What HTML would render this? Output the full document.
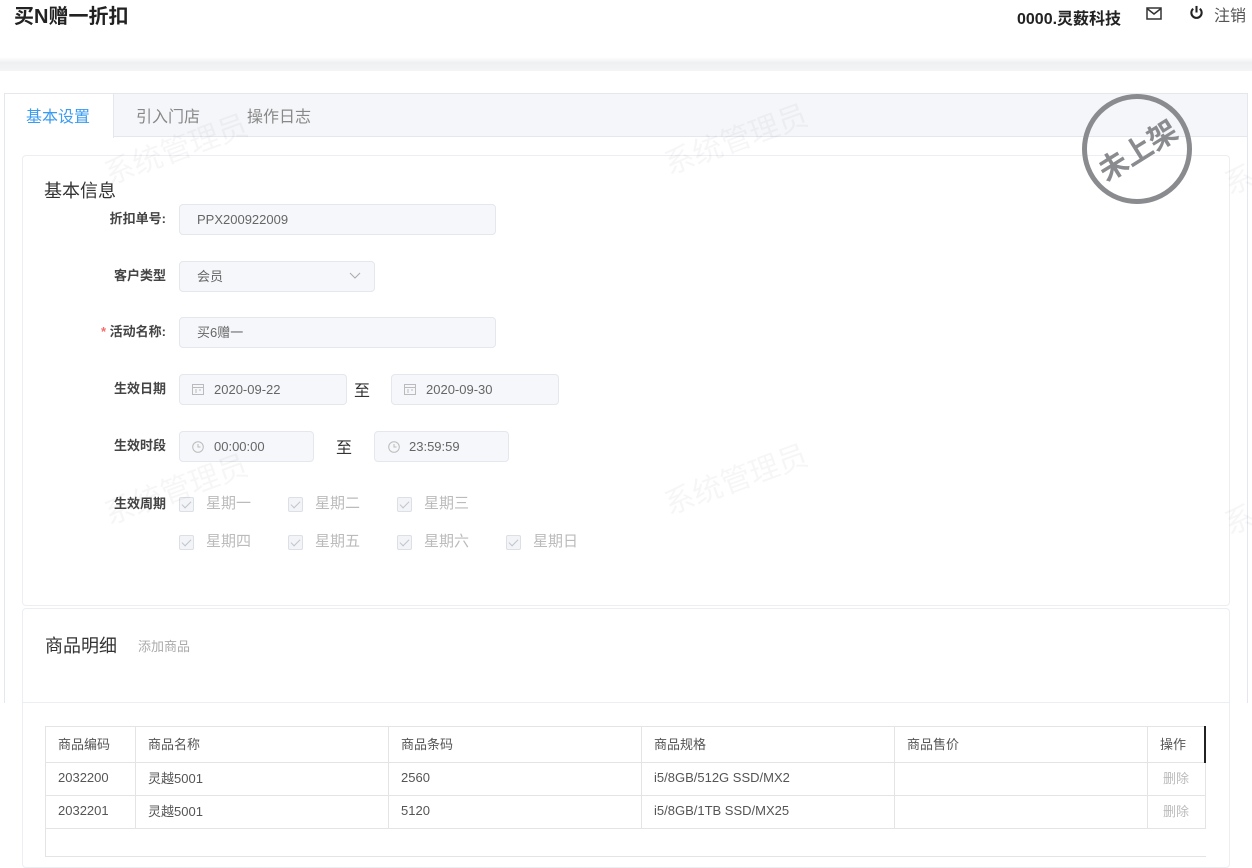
<!DOCTYPE html>
<html><head><meta charset="utf-8"><style>
*{margin:0;padding:0;box-sizing:border-box}
body{width:1252px;height:857px;overflow:hidden;background:#fff;font-family:"Liberation Sans","Noto Sans CJK SC",sans-serif;color:#333;position:relative}
.a{position:absolute}
.title{left:14px;top:0px;font-size:20px;font-weight:bold;color:#222}
.band{left:0;top:57px;width:1252px;height:14px;background:linear-gradient(#fff,#eef0f2 40%,#f3f4f6)}
.outer{left:4px;top:93px;width:1244px;height:610px;border:1px solid #e4e7ed;border-bottom:none}
.tabbar{left:5px;top:94px;width:1242px;height:43px;background:#f5f6f9;border-bottom:1px solid #e4e7ed}
.tab{top:96px;height:44px;line-height:44px;font-size:16px;color:#888}
.card{border:1px solid #ebeef2;border-radius:4px;background:#fff}
.lbl{width:120px;text-align:right;font-size:13px;font-weight:bold;color:#444;left:46px}
.inp{left:179px;height:31px;background:#f5f7fa;border:1px solid #e4e7ed;border-radius:4px;font-size:13px;color:#666;line-height:29px;padding-left:17px}
.cb{width:15px;height:15px;border:1px solid #dcdfe6;background:#f2f4f7;border-radius:2px}
.cb:after{content:"";position:absolute;left:4px;top:1px;width:4px;height:8px;border:solid #c0c4cc;border-width:0 1px 1px 0;transform:rotate(45deg)}
.cbl{font-size:15px;color:#bbb}
.wm{font-size:30px;color:rgba(0,0,0,0.035);transform:rotate(-20deg);white-space:nowrap}
table{border-collapse:collapse;font-size:13px;color:#555}
td{border:1px solid #e4e4e4;padding-left:12px;height:33px;padding-bottom:3px}
th{border:1px solid #e4e4e4;padding-left:12px;height:36px;text-align:left;font-weight:normal;color:#555;padding-bottom:2px}
</style></head><body>
<div class="a title">买N赠一折扣</div>
<div class="a" style="left:1017px;top:5px;font-size:16px;font-weight:bold;color:#222">0000.灵薮科技</div>
<svg class="a" style="left:1146px;top:7px" width="16" height="13" viewBox="0 0 16 13"><rect x="1" y="1" width="14" height="11" fill="none" stroke="#333" stroke-width="1.5"/><path d="M1 1.5L8 7L15 1.5" fill="none" stroke="#333" stroke-width="1.5"/></svg>
<svg class="a" style="left:1189px;top:5px" width="15" height="15" viewBox="0 0 16 16"><path d="M4.5 4A5.5 5.5 0 1 0 11.5 4" fill="none" stroke="#222" stroke-width="2.2"/><path d="M8 1V8" stroke="#222" stroke-width="2.2"/></svg>
<div class="a" style="left:1214px;top:2px;font-size:16px;color:#555">注销</div>
<div class="a band"></div>
<div class="a outer"></div>
<div class="a tabbar"></div>
<div class="a" style="left:5px;top:94px;width:109px;height:44px;background:#fff;border-right:1px solid #e4e7ed"></div>
<div class="a tab" style="left:26px;color:#3a9cf0">基本设置</div>
<div class="a tab" style="left:136px">引入门店</div>
<div class="a tab" style="left:247px">操作日志</div>
<div class="a card" style="left:22px;top:155px;width:1208px;height:451px"></div>
<div class="a" style="left:44px;top:177px;font-size:18px;color:#333">基本信息</div>
<div class="a lbl" style="top:208px">折扣单号:</div>
<div class="a inp" style="top:204px;width:317px">PPX200922009</div>
<div class="a lbl" style="top:265px">客户类型</div>
<div class="a inp" style="top:261px;width:196px">会员</div>
<svg class="a" style="left:349px;top:272px" width="12" height="8"><path d="M1 1L6 6L11 1" fill="none" stroke="#aaa"/></svg>
<div class="a lbl" style="top:321px"><span style="color:#f56c6c">* </span>活动名称:</div>
<div class="a inp" style="top:317px;width:317px">买6赠一</div>
<div class="a lbl" style="top:378px">生效日期</div>
<div class="a inp" style="top:374px;width:168px;padding-left:34px">2020-09-22</div>
<div class="a" style="left:354px;top:377px;font-size:16px">至</div>
<div class="a inp" style="left:391px;top:374px;width:168px;padding-left:34px">2020-09-30</div>
<svg class="a" style="left:192px;top:383px" width="12" height="12"><rect x="0.5" y="1.5" width="11" height="10" fill="none" stroke="#bbb"/><path d="M0.5 4.5H11.5M3 7h2M7 7h2M3 9h2" stroke="#bbb"/></svg>
<svg class="a" style="left:404px;top:383px" width="12" height="12"><rect x="0.5" y="1.5" width="11" height="10" fill="none" stroke="#bbb"/><path d="M0.5 4.5H11.5M3 7h2M7 7h2M3 9h2" stroke="#bbb"/></svg>
<div class="a lbl" style="top:435px">生效时段</div>
<div class="a inp" style="top:431px;width:135px;padding-left:34px">00:00:00</div>
<div class="a" style="left:336px;top:434px;font-size:16px">至</div>
<div class="a inp" style="left:374px;top:431px;width:135px;padding-left:34px">23:59:59</div>
<svg class="a" style="left:192px;top:441px" width="12" height="12"><circle cx="6" cy="6" r="5.3" fill="none" stroke="#bbb"/><path d="M6 3V6H8.5" fill="none" stroke="#bbb"/></svg>
<svg class="a" style="left:388px;top:441px" width="12" height="12"><circle cx="6" cy="6" r="5.3" fill="none" stroke="#bbb"/><path d="M6 3V6H8.5" fill="none" stroke="#bbb"/></svg>
<div class="a lbl" style="top:493px">生效周期</div>
<div class="a cb" style="left:179px;top:497px"></div><div class="a cbl" style="left:206px;top:492px">星期一</div>
<div class="a cb" style="left:288px;top:497px"></div><div class="a cbl" style="left:315px;top:492px">星期二</div>
<div class="a cb" style="left:397px;top:497px"></div><div class="a cbl" style="left:424px;top:492px">星期三</div>
<div class="a cb" style="left:179px;top:535px"></div><div class="a cbl" style="left:206px;top:530px">星期四</div>
<div class="a cb" style="left:288px;top:535px"></div><div class="a cbl" style="left:315px;top:530px">星期五</div>
<div class="a cb" style="left:397px;top:535px"></div><div class="a cbl" style="left:424px;top:530px">星期六</div>
<div class="a cb" style="left:506px;top:535px"></div><div class="a cbl" style="left:533px;top:530px">星期日</div>
<div class="a card" style="left:22px;top:608px;width:1208px;height:260px"></div>
<div class="a" style="left:22px;top:702px;width:1208px;border-top:1px solid #ebeef2"></div>
<div class="a" style="left:45px;top:632px;font-size:18px;color:#333">商品明细</div>
<div class="a" style="left:138px;top:636px;font-size:13px;color:#aaa">添加商品</div>
<div class="a" style="left:45px;top:726px;width:1161px;height:131px;border:1px solid #e4e4e4;border-right:none"></div>
<table class="a" style="left:45px;top:726px;width:1161px">
<tr><th style="width:90px">商品编码</th><th style="width:253px">商品名称</th><th style="width:253px">商品条码</th><th style="width:253px">商品规格</th><th style="width:253px">商品售价</th><th style="border-right:2px solid #222">操作</th></tr>
<tr><td>2032200</td><td>灵越5001</td><td>2560</td><td>i5/8GB/512G SSD/MX2</td><td></td><td style="color:#bbb;padding-left:15px">删除</td></tr>
<tr><td>2032201</td><td>灵越5001</td><td>5120</td><td>i5/8GB/1TB SSD/MX25</td><td></td><td style="color:#bbb;padding-left:15px">删除</td></tr>
</table>
<div class="a wm" style="left:100px;top:125px">系统管理员</div>
<div class="a wm" style="left:660px;top:115px">系统管理员</div>
<div class="a wm" style="left:660px;top:455px">系统管理员</div>
<div class="a wm" style="left:100px;top:465px">系统管理员</div>
<div class="a wm" style="left:1220px;top:135px">系统管理员</div>
<div class="a wm" style="left:1220px;top:475px">系统管理员</div>
<div class="a" style="left:1082px;top:94px;width:110px;height:110px;border:5px solid #8a8b8e;border-radius:50%"></div>
<div class="a" style="left:1092px;top:128px;width:90px;text-align:center;font-size:29px;font-weight:bold;color:#8a8b8e;transform:rotate(-32deg)">未上架</div>
</body></html>
